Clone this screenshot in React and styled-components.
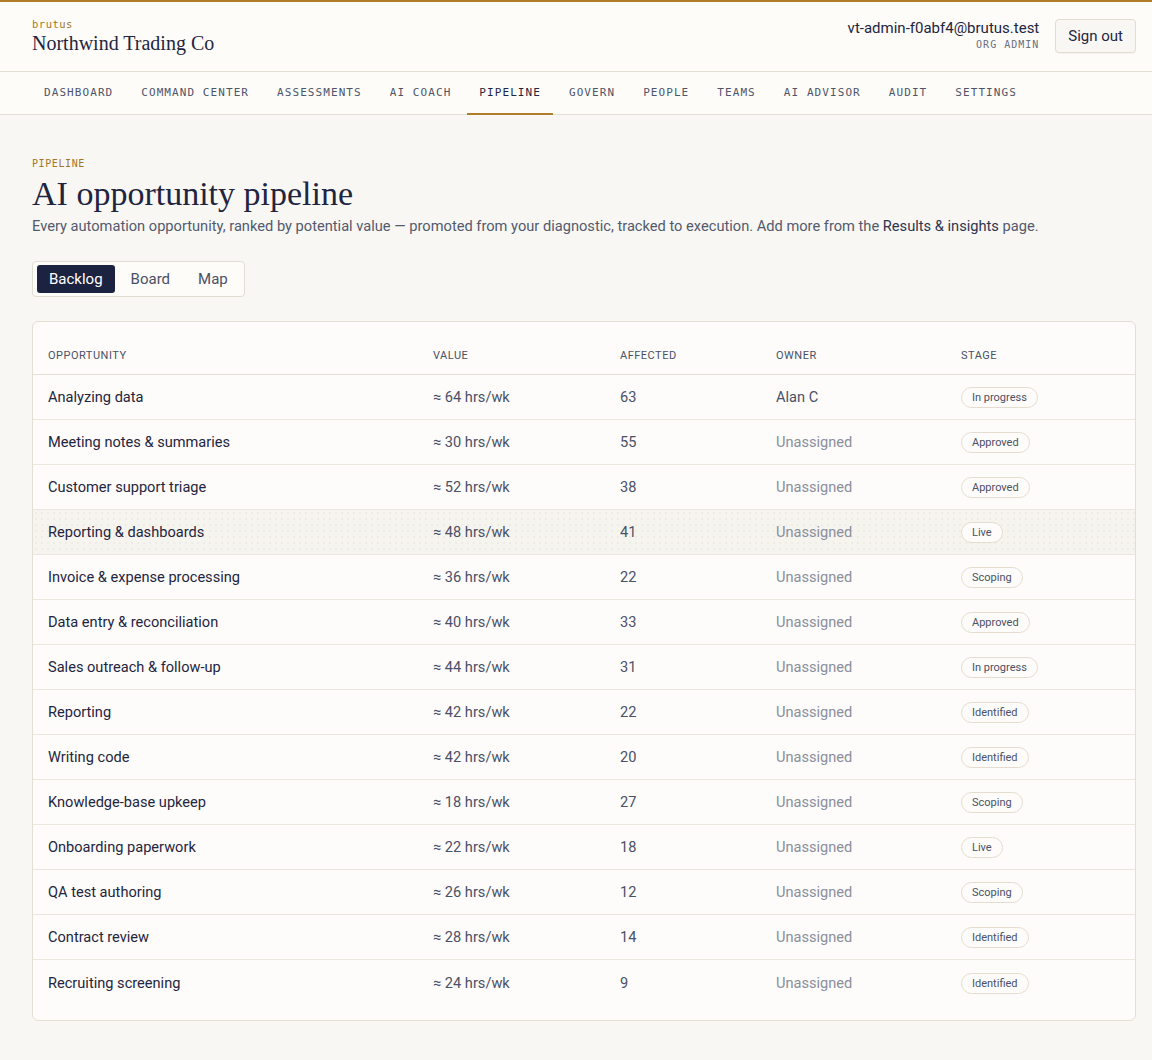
import React from "react";
import styled, { createGlobalStyle, css } from "styled-components";

const sans = `"Roboto", "Liberation Sans", sans-serif`;
const mono = `"DejaVu Sans Mono", "Liberation Mono", monospace`;
const serif = `"Liberation Serif", "DejaVu Serif", serif`;

const Global = createGlobalStyle`
  * { box-sizing: border-box; }
  html, body { margin: 0; padding: 0; background: #f8f7f4; }
  body { font-family: ${sans}; color: #1f2540; }
`;

const Page = styled.div`
  min-height: 1060px;
  background: #f8f7f4;
`;

const Header = styled.header`
  background: #fdfcf9;
  border-top: 2px solid #b07d2a;
  border-bottom: 1px solid #e4dfd5;
  height: 72px;
  padding: 0 16px 0 32px;
  display: flex;
  align-items: center;
  justify-content: space-between;
`;

const Brand = styled.div`
  display: flex;
  flex-direction: column;
  gap: 0;
`;

const BrandTag = styled.div`
  font-family: ${mono};
  font-size: 10.5px;
  color: #a47628;
  letter-spacing: 0.5px;
  line-height: 13px;
`;

const OrgName = styled.div`
  font-family: ${serif};
  font-size: 20px;
  color: #1f2540;
  line-height: 24px;
`;

const UserArea = styled.div`
  display: flex;
  align-items: center;
  gap: 16px;
  margin-top: -2px;
`;

const UserInfo = styled.div`
  display: flex;
  flex-direction: column;
  align-items: flex-end;
`;

const Email = styled.div`
  font-size: 15px;
  color: #1f2540;
  line-height: 19px;
`;

const Role = styled.div`
  font-family: ${mono};
  font-size: 10px;
  letter-spacing: 1px;
  color: #6a6f80;
  line-height: 14px;
`;

const SignOut = styled.button`
  font-family: ${sans};
  font-size: 15px;
  color: #1f2540;
  background: #f8f7f4;
  border: 1px solid #e2ddd2;
  border-radius: 4px;
  height: 34px;
  padding: 0 12px;
  box-shadow: 0 1px 1px rgba(0,0,0,0.04);
`;

const Nav = styled.nav`
  background: #fdfcf9;
  border-bottom: 1px solid #e4dfd5;
  height: 43px;
  padding: 0 32px;
  display: flex;
  gap: 4px;
`;

const Tab = styled.div`
  font-family: ${mono};
  font-size: 11px;
  letter-spacing: 1.075px;
  color: #4f5569;
  padding: 0 12px;
  display: flex;
  align-items: center;
  border-bottom: 2px solid transparent;
  margin-bottom: -1px;
  ${(p) =>
    p.$active &&
    css`
      color: #1f2540;
      border-bottom-color: #b07d2a;
    `}
`;

const Main = styled.main`
  padding: 43px 16px 40px 32px;
`;

const Eyebrow = styled.div`
  font-family: ${mono};
  font-size: 10px;
  letter-spacing: 0.6px;
  color: #a47628;
  line-height: 12px;
`;

const Title = styled.h1`
  font-family: ${serif};
  font-weight: normal;
  font-size: 34px;
  line-height: 38px;
  margin: 5px 0 0;
  color: #1f2540;
`;

const Subtitle = styled.p`
  font-size: 14.65px;
  color: #535a6e;
  margin: 3px 0 0;
  line-height: 20px;
`;

const Strong = styled.span`
  color: #2d3450;
`;

const Segmented = styled.div`
  margin-top: 25px;
  display: inline-flex;
  gap: 4px;
  padding: 3px 4px;
  border: 1px solid #e2ddd2;
  border-radius: 4px;
  background: #fdfcf9;
`;

const SegButton = styled.button`
  font-family: ${sans};
  font-size: 15px;
  border: none;
  border-radius: 3px;
  height: 28px;
  padding: 0 12px;
  background: ${(p) => (p.$active ? "#1c2340" : "transparent")};
  color: ${(p) => (p.$active ? "#fff" : "#4a5066")};
`;

const Card = styled.div`
  margin-top: 24px;
  background: #fdfcfa;
  border: 1px solid #e4dfd5;
  border-radius: 6px;
  overflow: hidden;
  padding-bottom: 15px;
`;

const cols = "385px 187px 156px 185px 1fr";

const HeadRow = styled.div`
  display: grid;
  grid-template-columns: ${cols};
  padding: 0 15px 12px;
  height: 53px;
  align-items: end;
  border-bottom: 1px solid #e4dfd5;
`;

const HeadCell = styled.div`
  font-size: 11px;
  letter-spacing: 0.5px;
  color: #4a5066;
  line-height: 13px;
`;

const Row = styled.div`
  display: grid;
  grid-template-columns: ${cols};
  padding: 0 15px;
  height: 45px;
  align-items: center;
  border-bottom: 1px solid #ebe7df;
  &:last-child { border-bottom: none; }
  ${(p) =>
    p.$hover &&
    css`
      background-color: #f6f4ef;
      background-image: radial-gradient(#e6e2d9 0.6px, transparent 0.8px);
      background-size: 6px 6px;
    `}
`;

const Cell = styled.div`
  font-size: 14.6px;
  color: ${(p) => (p.$muted ? "#8a8f9d" : p.$soft ? "#4a5066" : "#1f2540")};
`;

const Badge = styled.span`
  display: inline-flex;
  align-items: center;
  height: 21px;
  padding: 0 10px;
  border: 1px solid #e4ddcf;
  border-radius: 11px;
  font-size: 11px;
  color: #4a5066;
  background: #fdfcfa;
`;

const tabs = ["DASHBOARD", "COMMAND CENTER", "ASSESSMENTS", "AI COACH", "PIPELINE", "GOVERN", "PEOPLE", "TEAMS", "AI ADVISOR", "AUDIT", "SETTINGS"];

const rows = [
  ["Analyzing data", 64, 63, "Alan C", "In progress"],
  ["Meeting notes & summaries", 30, 55, null, "Approved"],
  ["Customer support triage", 52, 38, null, "Approved"],
  ["Reporting & dashboards", 48, 41, null, "Live"],
  ["Invoice & expense processing", 36, 22, null, "Scoping"],
  ["Data entry & reconciliation", 40, 33, null, "Approved"],
  ["Sales outreach & follow-up", 44, 31, null, "In progress"],
  ["Reporting", 42, 22, null, "Identified"],
  ["Writing code", 42, 20, null, "Identified"],
  ["Knowledge-base upkeep", 18, 27, null, "Scoping"],
  ["Onboarding paperwork", 22, 18, null, "Live"],
  ["QA test authoring", 26, 12, null, "Scoping"],
  ["Contract review", 28, 14, null, "Identified"],
  ["Recruiting screening", 24, 9, null, "Identified"],
];

export default function App() {
  return (
    <Page>
      <Global />
      <Header>
        <Brand>
          <BrandTag>brutus</BrandTag>
          <OrgName>Northwind Trading Co</OrgName>
        </Brand>
        <UserArea>
          <UserInfo>
            <Email>vt-admin-f0abf4@brutus.test</Email>
            <Role>ORG ADMIN</Role>
          </UserInfo>
          <SignOut>Sign out</SignOut>
        </UserArea>
      </Header>
      <Nav>
        {tabs.map((t) => (
          <Tab key={t} $active={t === "PIPELINE"}>{t}</Tab>
        ))}
      </Nav>
      <Main>
        <Eyebrow>PIPELINE</Eyebrow>
        <Title>AI opportunity pipeline</Title>
        <Subtitle>
          Every automation opportunity, ranked by potential value — promoted from your diagnostic, tracked to execution. Add more from the <Strong>Results &amp; insights</Strong> page.
        </Subtitle>
        <Segmented>
          <SegButton $active>Backlog</SegButton>
          <SegButton>Board</SegButton>
          <SegButton>Map</SegButton>
        </Segmented>
        <Card>
          <HeadRow>
            <HeadCell>OPPORTUNITY</HeadCell>
            <HeadCell>VALUE</HeadCell>
            <HeadCell>AFFECTED</HeadCell>
            <HeadCell>OWNER</HeadCell>
            <HeadCell>STAGE</HeadCell>
          </HeadRow>
          {rows.map(([name, val, aff, owner, stage], i) => (
            <Row key={name} $hover={i === 3}>
              <Cell>{name}</Cell>
              <Cell $soft>≈ {val} hrs/wk</Cell>
              <Cell $soft>{aff}</Cell>
              <Cell $muted={!owner} $soft={!!owner}>{owner || "Unassigned"}</Cell>
              <div><Badge>{stage}</Badge></div>
            </Row>
          ))}
        </Card>
      </Main>
    </Page>
  );
}
